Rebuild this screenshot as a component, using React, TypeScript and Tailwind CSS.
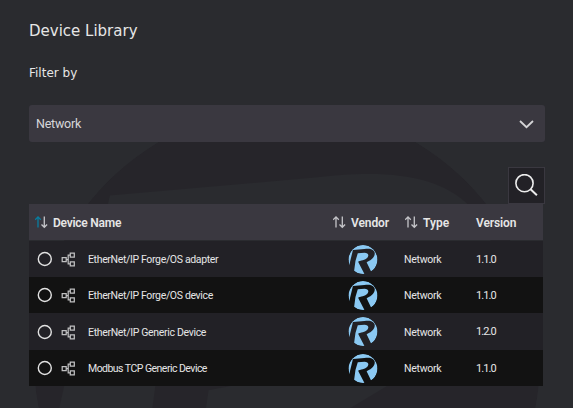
import React from "react";

function Mark({ id, className, fill }: { id: string; className: string; fill: string }) {
  return (
    <svg viewBox="-100 -100 200 200" className={className} aria-hidden="true">
      <mask id={id}>
        <circle r="100" fill="white" />
        <path d="M-70 -65 L10 -72 C42 -76 60 -72 71 -62 C84 -52 83 -36 76 -22 C69 -7 55 5 40 10 L25 19 L60 92 L36 110 L10 100 L-32 19 L-31 12 C-5 7 25 0 34 -19 C42 -37 31 -45 10 -46 L-36 -43 L-52 10 L-62 84 L-94 55 L-90 19 L-88 10 L-74 -47 Z" fill="black" />
      </mask>
      <circle r="100" fill={fill} mask={`url(#${id})`} />
    </svg>
  );
}

function Sort({ active = false }: { active?: boolean }) {
  return (
    <svg width="13" height="14" viewBox="0 0 13 14" fill="none" strokeWidth="1.3" className="shrink-0">
      <path d="M3 12.5V2M.2 4.7 3 1.9l2.8 2.8" stroke={active ? "#087da0" : "#c5c5c9"} />
      <path d="M9.3 1.5v10.6M6.5 9.5l2.8 2.8 2.8-2.8" stroke="#c5c5c9" />
    </svg>
  );
}

const rows = [
  { name: "EtherNet/IP Forge/OS adapter", tracking: "tracking-[-0.35px]", version: "1.1.0" },
  { name: "EtherNet/IP Forge/OS device", tracking: "tracking-[-0.35px]", version: "1.1.0" },
  { name: "EtherNet/IP Generic Device", tracking: "tracking-[-0.33px]", version: "1.2.0" },
  { name: "Modbus TCP Generic Device", tracking: "tracking-[-0.53px]", version: "1.1.0" },
];

export default function App() {
  return (
    <main className="relative h-[408px] w-[573px] overflow-hidden bg-[#2a2b2f] pl-[29px] pr-7 font-['Roboto',sans-serif] text-[#e6e6e6]">
      <Mark id="watermark" fill="#26252a" className="absolute left-[34px] top-[107px] size-[506px]" />
      <div className="relative flex flex-col">
        <h1 className="mt-5 h-[22px] font-['DejaVu_Sans',sans-serif] text-[15px] leading-[22px]">Device Library</h1>
        <p className="mt-[21px] h-5 font-['DejaVu_Sans',sans-serif] text-[12px] leading-5">Filter by</p>
        <div className="mt-[22px] flex h-[37px] items-center justify-between rounded-[3px] bg-[#3a3840] pl-[7px] pr-[11px]">
          <span className="pt-px text-[12.5px] tracking-[-0.25px] text-[#d7d7d9]">Network</span>
          <svg width="15" height="10" viewBox="0 0 15 10" fill="none"><path d="M1 2 7.5 8.2 14 2" stroke="#d4d4d6" strokeWidth="1.8" /></svg>
        </div>
        <button className="mt-[25px] flex h-[37px] w-[37px] items-center justify-center self-end border border-[#3a3840] bg-[#222126]">
          <svg width="24" height="24" viewBox="0 0 24 24" fill="none" stroke="#ececec" strokeWidth="1.6"><circle cx="9.5" cy="9.2" r="8.6" /><path d="m15.6 15.3 6.3 5.9" strokeWidth="2" /></svg>
        </button>
        <div className="flex h-9 w-[514px] items-center bg-[#3a3840] text-xs font-semibold">
          <div className="flex w-[304px] items-center gap-[5px] pl-1.5"><Sort active /><span className="pt-px tracking-[-0.25px]">Device Name</span></div>
          <div className="flex w-[72px] items-center gap-[5px]"><Sort /><span className="pt-px tracking-[-0.1px]">Vendor</span></div>
          <div className="flex w-[71px] items-center gap-[5px]"><Sort /><span className="pt-px">Type</span></div>
          <span className="pt-px tracking-[-0.1px]">Version</span>
        </div>
        <div className="mt-px w-[514px]">
          {rows.map((row, i) => (
            <div key={row.name} className={`flex items-center text-[10.5px] ${i % 2 ? "h-9 bg-[#121212]" : i === 2 ? "h-[37px] bg-[#222126]" : "h-9 bg-[#222126]"}`}>
              <div className="flex w-[59px] items-center pl-2">
                <svg width="16" height="16" viewBox="0 0 16 16" fill="none" stroke="#e2e2e2" strokeWidth="1.4"><circle cx="7.8" cy="8" r="6.5" /></svg>
                <svg className="ml-2 mt-px" width="15" height="15" viewBox="0 0 15 15" fill="none" stroke="#c0c0c1" strokeWidth="1.25"><path d="M1.2 5.6h4v4h-4zM9.3 1.2h4v4h-4zM9.3 9.8h4v4h-4zM5.2 7.5h2m2-4.3H7.2v8.6h2" /></svg>
              </div>
              <span className={`w-[260px] whitespace-nowrap pt-[2px] ${row.tracking}`}>{row.name}</span>
              <Mark id={`vendor-${i}`} fill="#8bc9f3" className="h-[29px] w-[30px]" />
              <span className="ml-[26px] w-[72px] pt-[2px] tracking-[-0.28px]">Network</span>
              <span className="pt-[2px] text-[11px] tracking-[-0.9px]">{row.version}</span>
            </div>
          ))}
        </div>
      </div>
    </main>
  );
}
